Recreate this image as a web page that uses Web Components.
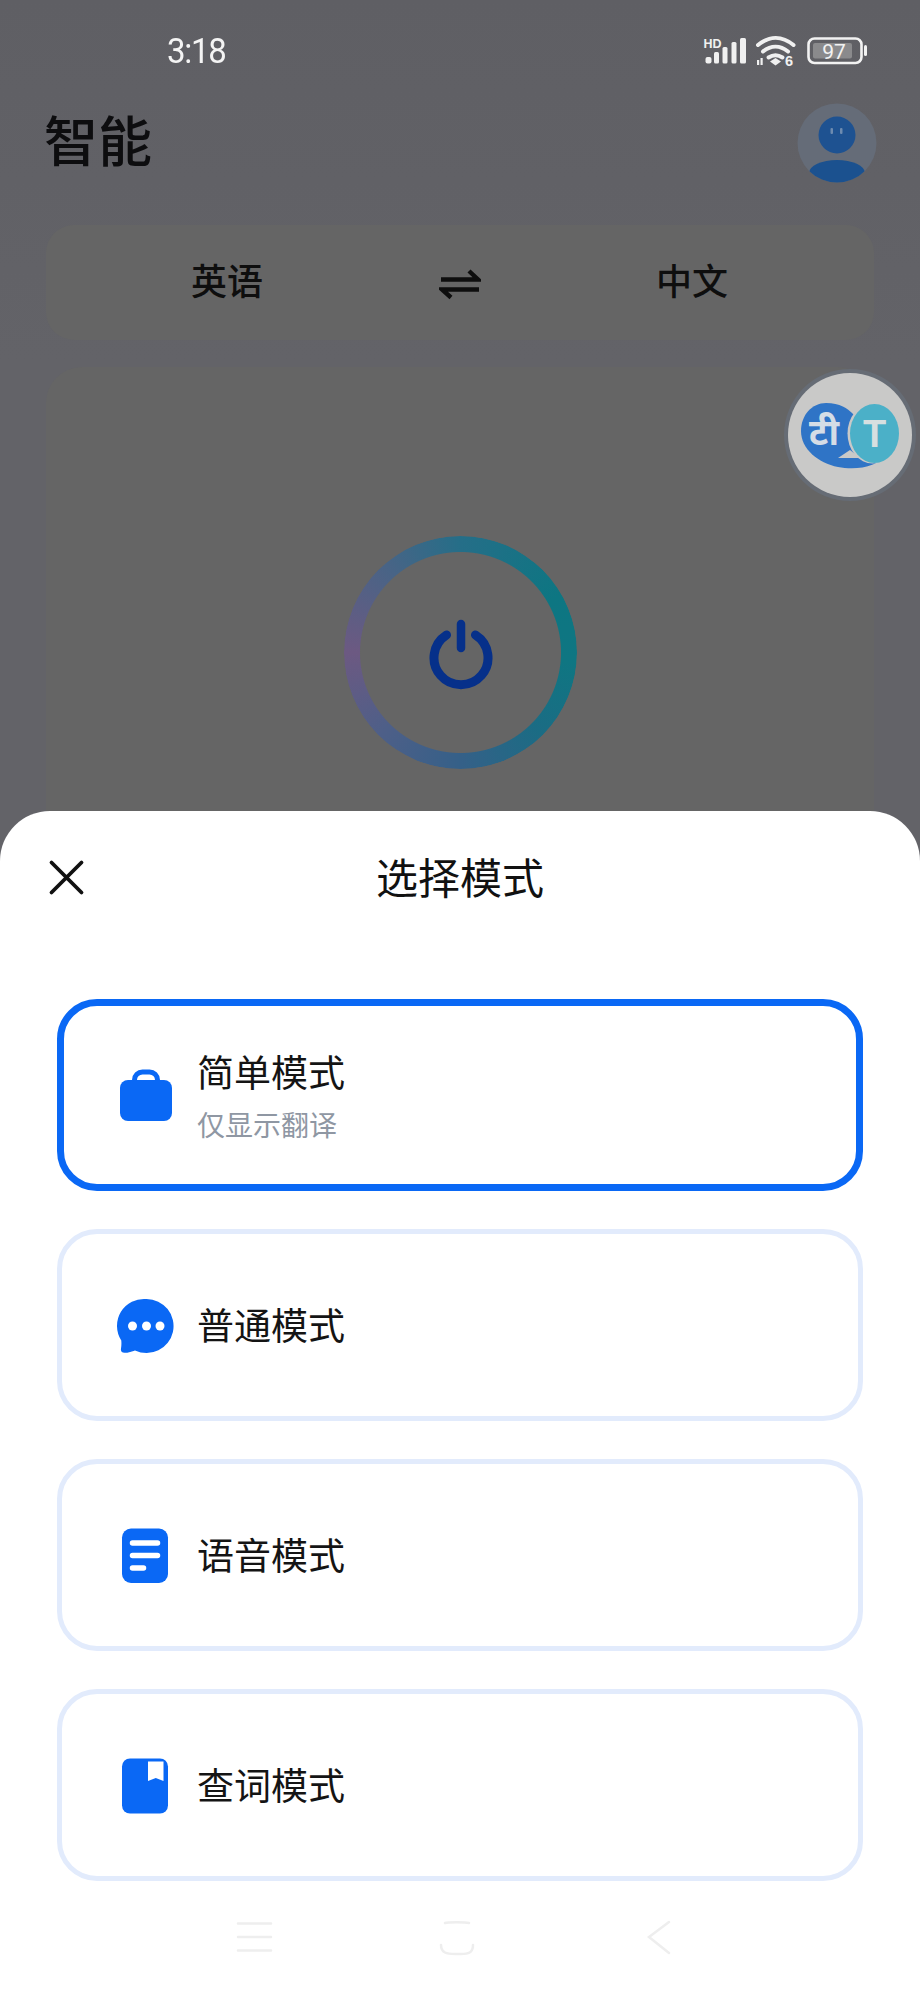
<!DOCTYPE html>
<html lang="zh">
<head>
<meta charset="utf-8">
<title>智能</title>
<style>
html,body{margin:0;padding:0;background:#626266}
body{width:920px;height:1992px;overflow:hidden;font-family:"Noto Sans CJK SC","Noto Sans",sans-serif}
</style>
</head>
<body>
<phone-screen>
  <status-bar slot="top"></status-bar>
  <app-header slot="top">智能</app-header>
  <lang-bar slot="top"><span slot="from">英语</span><span slot="to">中文</span></lang-bar>
  <power-card slot="top"></power-card>
  <float-badge slot="float"></float-badge>
  <mode-sheet slot="sheet" heading="选择模式">
    <mode-card selected>
      <svg slot="icon" width="66" height="66" viewBox="0 0 66 66"><path d="M21.500 21v-3a8 8 0 0 1 8-8h7a8 8 0 0 1 8 8v3" fill="none" stroke="#0a68f5" stroke-width="5"/><rect x="7" y="18" width="52" height="41" rx="8" fill="#0a68f5"/></svg>
      <span slot="title">简单模式</span>
      <span slot="sub">仅显示翻译</span>
    </mode-card>
    <mode-card>
      <svg slot="icon" width="66" height="66" viewBox="0 0 66 66"><path d="M33.500 7a27 27 0 1 1-11.500 51.400C19.500 59.500 15 60.800 11.500 60.800 9 60.800 7.500 59.300 8 56.500 8.500 54 8.500 51 8.300 48.500A27 27 0 0 1 33.500 7Z" fill="#0a68f5"/><circle cx="19.500" cy="34" r="4.500" fill="#fff"/><circle cx="33.500" cy="34" r="4.500" fill="#fff"/><circle cx="47" cy="34" r="4.500" fill="#fff"/></svg>
      <span slot="title">普通模式</span>
    </mode-card>
    <mode-card>
      <svg slot="icon" width="66" height="66" viewBox="0 0 66 66"><rect x="9" y="6.500" width="46" height="54.500" rx="9" fill="#0a68f5"/><path d="M19.500 21h25M19.500 33.500h25M19.500 46h11" stroke="#fff" stroke-width="5.500" stroke-linecap="round" fill="none"/></svg>
      <span slot="title">语音模式</span>
    </mode-card>
    <mode-card>
      <svg slot="icon" width="66" height="66" viewBox="0 0 66 66"><rect x="9" y="6.500" width="46" height="55" rx="8" fill="#0a68f5"/><path d="M35 9.500h15.500v19.500l-7.700-3-7.800 3Z" fill="#fff"/></svg>
      <span slot="title">查词模式</span>
    </mode-card>
    <nav-bar slot="nav"></nav-bar>
  </mode-sheet>
</phone-screen>

<script>
function def(name, html, setup){
  customElements.define(name, class extends HTMLElement{
    constructor(){super();this.attachShadow({mode:'open'}).innerHTML=html;}
    connectedCallback(){ if(setup) setup(this); }
  });
}
const CJK='"Noto Sans CJK SC","Noto Sans",sans-serif';

def('phone-screen',`<style>
:host{display:block;position:relative;width:920px;height:1992px;overflow:hidden;background:linear-gradient(#5f5f64,#636368 360px,#636368)}
.top{display:flex;flex-direction:column;height:861px;margin-bottom:-50px;overflow:hidden}
.sheet{position:relative}
</style>
<div class="top"><slot name="top"></slot></div>
<slot name="float"></slot>
<div class="sheet"><slot name="sheet"></slot></div>`);

def('status-bar',`<style>
:host{display:flex;align-items:flex-start;justify-content:space-between;height:100px;box-sizing:border-box;padding:36px 53px 0 167px;flex:none}
.t{font:400 33px/28px Roboto,sans-serif;color:#f4f4f4;letter-spacing:-1.300px;transform:scaleY(1.080);transform-origin:top left}
.r{display:flex;align-items:flex-start;gap:0}
svg{display:block;overflow:visible}
</style>
<div class="t">3:18</div>
<div class="r"><svg width="167" height="34" viewBox="0 0 167 34">
<g fill="#f0f0f0">
<text x="3.500" y="11.500" font-family="Liberation Sans,sans-serif" font-weight="700" font-size="12.500">HD</text>
<rect x="5.500" y="21" width="6" height="6.500" rx="2"/><rect x="14" y="16" width="5" height="11.500" rx="1.500"/><rect x="22.500" y="11" width="5" height="16.500" rx="1.500"/><rect x="31.500" y="6" width="5" height="21.500" rx="1.500"/><rect x="40" y="2" width="6" height="25.500" rx="1.500"/>
<path d="M75.500 22l5.500 3.500-5.500 4-5.500-4Z"/>
<rect x="57" y="24" width="2.200" height="5"/><rect x="60.500" y="22" width="2.200" height="7"/>
<text x="85" y="30" font-family="Liberation Sans,sans-serif" font-weight="700" font-size="14.500">6</text>
</g>
<g fill="none" stroke="#f0f0f0" stroke-width="4" stroke-linecap="round">
<path d="M58 9c11.500-9.500 24-9.500 35.500 0"/><path d="M63 15.500c8-6.500 17-6.500 25 0"/><path d="M68.500 21.500c4.500-3 9.500-3 14 0"/>
</g>
<rect x="108.500" y="2.500" width="53" height="24.500" rx="6" fill="none" stroke="#f2f2f2" stroke-width="2.600"/>
<rect x="113" y="7" width="39" height="15.500" rx="2" fill="#8a8a8c"/>
<text x="134" y="23" text-anchor="middle" font-family="Roboto,sans-serif" font-size="21" fill="#f2f2f2">97</text>
<rect x="164" y="9" width="3" height="11" rx="1.500" fill="#f2f2f2"/>
</svg></div>`);

def('app-header',`<style>
:host{display:flex;align-items:center;justify-content:space-between;height:85px;padding:0 43px 0 44px;flex:none;margin-bottom:40px}
.h{font:500 54px/1 ${CJK};color:#0d0d0f;padding-bottom:7px}
</style>
<div class="h"><slot></slot></div>
<svg width="80" height="80" viewBox="0 0 80 80"><defs><clipPath id="c"><circle cx="40" cy="40" r="39.500"/></clipPath></defs>
<circle cx="40" cy="40" r="39.500" fill="#656c78"/>
<g clip-path="url(#c)"><circle cx="40" cy="32" r="18.500" fill="#1e5291"/><ellipse cx="40" cy="70" rx="28" ry="13" fill="#1b518f"/></g>
<rect x="33.500" y="25" width="2.500" height="6" rx="1" fill="#6d8bb0"/><rect x="43" y="25" width="2.500" height="6" rx="1" fill="#6d8bb0"/>
</svg>`);

def('lang-bar',`<style>
:host{display:grid;grid-template-columns:1fr 60px 1fr;align-items:center;height:115px;margin:0 46px;border-radius:28px;background:#656565;flex:none;font:500 36px/1 ${CJK};color:#0e0e0e}
.a{text-align:center;padding:0 22px 7px 0}.b{text-align:center;padding:0 0 7px 20px}
svg{display:block;margin:2px auto 0}
</style>
<div class="a"><slot name="from"></slot></div>
<svg width="42" height="32" viewBox="0 0 42 32"><path d="M2 11.500h37L30 3" fill="none" stroke="#0e0e0e" stroke-width="4.400"/><path d="M40 21.500H3l9 8" fill="none" stroke="#0e0e0e" stroke-width="4.400"/></svg>
<div class="b"><slot name="to"></slot></div>`);

def('power-card',`<style>
:host{display:flex;justify-content:center;align-items:flex-start;box-sizing:border-box;margin:27px 46px 0;padding-top:169px;height:640px;border-radius:36px;background:#656565;flex:none}
.ring{position:relative;width:233px;height:233px;border-radius:50%;display:flex;align-items:center;justify-content:center}
.g{width:233px;height:233px;border-radius:50%;background:conic-gradient(#256e88 0deg,#0d7682 60deg,#0f7682 95deg,#1b6c84 135deg,#356088 180deg,#4e5f88 225deg,#6c5982 270deg,#486486 320deg,#256e88 360deg);-webkit-mask:radial-gradient(circle,transparent 100px,#000 101px);mask:radial-gradient(circle,transparent 100px,#000 101px)}
svg{position:absolute;left:84px;top:82px}
</style>
<div class="ring"><div class="g"></div>
<svg width="66" height="76" viewBox="0 0 66 76"><path d="M18.500 17a27 27 0 1 0 29 0" fill="none" stroke="#06308a" stroke-width="9" stroke-linecap="round"/><path d="M33 6v24" fill="none" stroke="#06308a" stroke-width="8.500" stroke-linecap="round"/></svg>
</div>`);

def('float-badge',`<style>
:host{display:block;position:absolute;left:784px;top:369px;width:132px;height:132px;border-radius:50%;background:#666c75}
.c{position:absolute;left:4px;top:4px;width:124px;height:124px;border-radius:50%;background:#c9c9c8}
svg{position:absolute;left:0;top:0}
.teal{position:absolute;left:62px;top:31px;width:49px;height:59px;display:flex;align-items:center;justify-content:center;font:700 38px/1 "Liberation Sans",sans-serif;color:#d7dfe0}
.hi{position:absolute;left:6px;top:33px;width:60px;height:62px;display:flex;align-items:center;justify-content:center;font:700 36px/1 "Noto Sans Devanagari","Lohit Devanagari","FreeSans","Noto Sans",sans-serif;color:#d5dde6}
</style>
<div class="c">
<svg width="124" height="124" viewBox="0 0 124 124">
<path d="M38 30C52 30 60 36 64 40L102 78C90 96 66 97 50 94 30 90 13 76 13 58 13 42 24 30 38 30Z" fill="#2f74c6"/>
<ellipse cx="84.500" cy="60.500" rx="25" ry="30" fill="#c9c9c8"/>
<ellipse cx="86.500" cy="60.500" rx="24.500" ry="29.500" fill="#4bb0c8"/>
<path d="M50 85l22 0-10-8Z" fill="#c9c9c8"/>
</svg>
<div class="teal">T</div><div class="hi">टी</div></div>`);

customElements.define('mode-sheet', class extends HTMLElement{
  constructor(){super();this.attachShadow({mode:'open'}).innerHTML=`<style>
:host{display:block;position:relative;height:1181px;box-sizing:border-box;background:#fff;border-radius:50px 50px 0 0;overflow:hidden}
.head{position:relative;height:132px;display:flex;align-items:center;justify-content:center;font:400 42px/1 ${CJK};color:#111}
.head span{padding-bottom:2px}
.head svg{position:absolute;left:48px;top:48px}
.list{display:flex;flex-direction:column;gap:38px;margin:56px 57px 0}
</style>
<div class="head"><svg width="37" height="37" viewBox="0 0 37 37"><path d="M3.500 3.500l30 30M33.500 3.500l-30 30" stroke="#111" stroke-width="3.800" stroke-linecap="round" fill="none"/></svg><span id="t"></span></div>
<div class="list"><slot></slot></div>
<slot name="nav"></slot>`;}
  connectedCallback(){this.shadowRoot.getElementById('t').textContent=this.getAttribute('heading');}
});

def('mode-card',`<style>
:host{display:flex;align-items:center;box-sizing:border-box;height:192px;border:5px solid #e2ebfc;border-radius:40px;padding-left:51px;gap:18px;font:400 37px/1 ${CJK};color:#141414}
:host([selected]){border:7px solid #0a68f5;padding-left:49px}
.i{width:66px;height:66px;flex:none}
.i ::slotted(svg){display:block}
.x{display:flex;flex-direction:column;gap:20px;padding-bottom:2px}
:host([selected]) .x{padding-bottom:0}
.s{font-size:28px;color:#8f97a3;display:none}
:host([selected]) .s{display:block}
</style>
<div class="i"><slot name="icon"></slot></div>
<div class="x"><div><slot name="title"></slot></div><div class="s"><slot name="sub"></slot></div></div>`);

def('nav-bar',`<style>
:host{display:flex;justify-content:center;height:110px}
svg{display:block}
</style>
<svg width="920" height="110" viewBox="0 0 920 110"><g fill="none" stroke="#eeeeee" stroke-width="2.500" stroke-linecap="round">
<path d="M238 42.500h33M238 56h33M238 69.500h33"/>
<path d="M445 42c3-1 20-1 24 0M441 64c0 8 6 9 14 9h6c7 0 12-1 12-9"/>
<path d="M669 41l-20 15 20 16"/>
</g></svg>`);
</script>
</body>
</html>
